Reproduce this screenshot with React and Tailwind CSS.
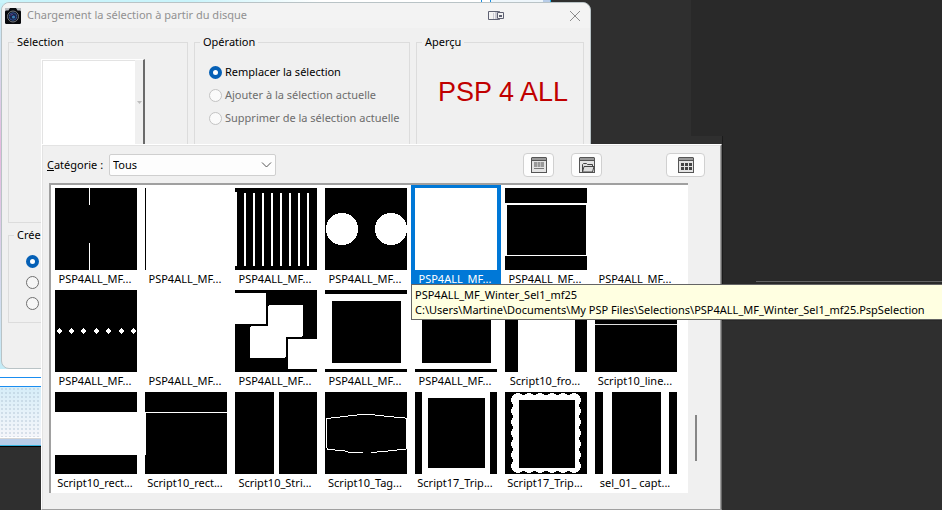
import React from "react";

const scallops = [
  ...[8, 19, 30, 41, 52, 63, 74].flatMap((y) => [
    [12, y],
    [70, y],
  ]),
  ...[13, 24, 35, 47, 58, 69].flatMap((x) => [
    [x, 7],
    [x, 75],
  ]),
];

const thumbs = [
  {
    name: "PSP4ALL_MF...",
    art: <path fill="#fff" d="M34 0h1v17h-1zM34 55h1v27h-1z" />,
  },
  { name: "PSP4ALL_MF...", art: <path fill="#fff" d="M1 0h81v82H1z" /> },
  {
    name: "PSP4ALL_MF...",
    art: (
      <path
        fill="#fff"
        d="M0 4h2v74H0zM9 5h2v73H9zM18 5h2v73h-2zM27 5h2v73h-2zM36 5h2v73h-2zM45 5h2v73h-2zM54 5h2v73h-2zM63 5h2v73h-2zM72 5h2v73h-2z"
      />
    ),
  },
  {
    name: "PSP4ALL_MF...",
    art: (
      <g fill="#fff">
        <circle cx="17" cy="41" r="16" />
        <circle cx="66" cy="41" r="16" />
      </g>
    ),
  },
  { name: "PSP4ALL_MF...", selected: true, art: <path fill="#fff" d="M0 0h82v82H0z" /> },
  {
    name: "PSP4ALL_MF...",
    art: <path fill="#fff" d="M0 15h82v2H0zM0 17h2v51H0zM81 17h1v51h-1zM0 67h82v1H0z" />,
  },
  { name: "PSP4ALL_MF...", art: <path fill="#fff" d="M0 0h82v82H0z" /> },
  {
    name: "PSP4ALL_MF...",
    art: (
      <path
        fill="#fff"
        d="M4 38l3 3-3 3-3-3zM16 38l3 3-3 3-3-3zM28 38l3 3-3 3-3-3zM41 38l3 3-3 3-3-3zM53 38l3 3-3 3-3-3zM66 38l3 3-3 3-3-3zM78 38l3 3-3 3-3-3z"
      />
    ),
  },
  { name: "PSP4ALL_MF...", art: <path fill="#fff" d="M0 0h82v82H0z" /> },
  {
    name: "PSP4ALL_MF...",
    art: (
      <g fill="#fff">
        <path d="M0 3h31v31H0zM53 49h29v30H53zM33 34h18v14H33z" />
        <rect x="33" y="15" width="35" height="32" rx="2" />
        <rect x="15" y="36" width="36" height="32" rx="2" />
      </g>
    ),
  },
  {
    name: "PSP4ALL_MF...",
    art: <path fill="#fff" fillRule="evenodd" d="M0 4h82v75H0zM7 11v62h69V11z" />,
  },
  {
    name: "PSP4ALL_MF...",
    art: <path fill="#fff" fillRule="evenodd" d="M0 4h82v75H0zM7 11v62h69V11z" />,
  },
  { name: "Script10_fro...", art: <path fill="#fff" d="M13 0h57v82H13z" /> },
  { name: "Script10_line...", art: <path fill="#ddd" d="M0 34h82v1H0z" /> },
  { name: "Script10_rect...", art: <path fill="#fff" d="M0 20h82v43H0z" /> },
  { name: "Script10_rect...", art: <path fill="#fff" d="M0 20h82v1H0zM0 21h1v42H0z" /> },
  { name: "Script10_Stri...", art: <path fill="#fff" d="M39 0h5v82h-5z" /> },
  {
    name: "Script10_Tag...",
    art: (
      <path
        fill="none"
        stroke="#fff"
        d="M38 60.5H25L18 58.5L2 57.5V56L1.500 28V26.500L19 24.500L37 22.500H46L63 24.500L80 26L81.500 27V57L63 59L46 60.500"
      />
    ),
  },
  {
    name: "Script17_Trip...",
    art: <path fill="#fff" fillRule="evenodd" d="M7 0h68v82H7zM13 6v70h57V6z" />,
  },
  {
    name: "Script17_Trip...",
    art: (
      <g>
        <path fill="#fff" d="M8 3h66v76H8z" />
        {scallops.map(([x, y]) => (
          <circle key={`${x}-${y}`} cx={x} cy={y} r="6" fill="#fff" />
        ))}
        <path fill="#000" d="M14 8h56v68H14z" />
      </g>
    ),
  },
  { name: "sel_01_ capt...", art: <path fill="#fff" d="M8 0h9v82H8zM66 0h8v82h-8z" /> },
];

const radioClass =
  "m-0 size-[13px] shrink-0 appearance-none rounded-full border border-[#6f6f6f] bg-[#f6f6f6] checked:border-4 checked:border-[#0560b6] checked:bg-white disabled:border-[#c3c3c3] disabled:bg-[#fafafa]";

function Group({ title, className, children }) {
  return (
    <fieldset className={`min-w-0 border border-[#dcdcdc] px-[5px] ${className}`}>
      <legend className="px-[3px] leading-4">{title}</legend>
      {children}
    </fieldset>
  );
}

function Choice({ label, ...props }) {
  return (
    <label className="flex items-center gap-[3px] leading-4 text-black has-disabled:text-[#6d6d6d]">
      <input type="radio" name="operation" className={radioClass} {...props} />
      {label}
    </label>
  );
}

function AppIcon() {
  return (
    <svg className="size-4 shrink-0" viewBox="0 0 16 16" aria-hidden="true">
      <path fill="#b9bcc0" d="M0 0h16v16H0z" />
      <path fill="#08090c" d="M1 2.500h2.500L5 0h6l1.500 2.500H15l1 1V15l-1 1H1l-1-1V3.500z" />
      <circle cx="8" cy="8.500" r="5.500" fill="#14171d" stroke="#73777e" strokeWidth="1" />
      <circle cx="8" cy="8.500" r="3.800" fill="#17244a" stroke="#34508e" />
      <circle cx="8.500" cy="9" r="1.600" fill="#3d7fb4" />
      <path stroke="#8b4fa4" d="M6 7.500l1.500-1.500" />
    </svg>
  );
}

function PanelFrame({ children }) {
  return (
    <svg className="size-4" viewBox="0 0 16 16" aria-hidden="true">
      <path fill="#555" d="M0 1l1-1h14l1 1v15H0z" />
      <path fill="#999" d="M1 1h14v2H1z" />
      <path fill="#e4e4e4" d="M1 4h14v11H1z" />
      {children}
    </svg>
  );
}

function ToolButton({ label, className, children }) {
  return (
    <button
      type="button"
      aria-label={label}
      className={`flex h-6 items-center justify-center rounded-[4px] border border-[#d0d0d0] bg-[#fdfdfd] ${className}`}
    >
      {children}
    </button>
  );
}

function Wallpaper() {
  return (
    <div className="absolute inset-0 flex flex-col bg-[#2f2f2f]" aria-hidden="true">
      <div className="flex h-[446px] w-[551px] flex-col border-r border-[#25b5e8] bg-white">
        <div className="flex h-[3px]">
          <div className="w-80 bg-linear-to-r from-[#c9f4fb] from-60% to-white" />
          <div className="flex-1 bg-white" />
          <div className="w-[10px] border-x border-[#1a8fe0] bg-white" />
          <div className="w-[52px] bg-[#eef6fb]" />
          <div className="w-[7px] bg-[#b8cde9]" />
        </div>
        <div className="h-[366px] w-3 bg-linear-to-b from-[#c4f1f9] via-[#e6b9de] via-40% to-[#c4ecf7]" />
        <div className="h-2" />
        <div className="h-[10px] border-y border-[#1a8df0]" />
        <div className="flex flex-1 bg-linear-to-b from-[#d6edf8] to-[#f5f6fa]">
          <div className="flex-1 bg-[radial-gradient(#9fb4c855_1px,transparent_1px)] bg-size-[4px_4px]" />
        </div>
        <div className="h-[2px] border-b border-[#d5d5d5] bg-white" />
        <div className="h-[7px] border-b border-[#35b3df] bg-[#b8cde9]" />
      </div>
      <div className="h-px w-[551px] bg-black" />
    </div>
  );
}

export default function App() {
  return (
    <main className="relative h-screen overflow-hidden bg-[#2f2f2f] font-['Noto_Sans',sans-serif] text-[11px] text-black">
      <Wallpaper />
      <div className="absolute top-0 right-0 left-[691px] h-[136px] bg-[#292929]" />
      <div className="absolute top-[136px] right-0 left-[722px] h-[185px] border-l border-[#1b1b1b] bg-[#292929]" />
      <div className="absolute top-[281px] right-0 left-[756px] h-1 border-t border-[#636363]" />

      <section className="absolute top-[2px] left-px h-[367px] w-[590px] rounded-lg border border-[#b9c3c6] bg-[#f0f0f0]">
        <header className="flex h-[25px] items-center rounded-t-lg bg-[#f3f3f3] pr-[9px] pl-[3px]">
          <AppIcon />
          <h1 className="ml-[6px] flex-1 text-[#919191]">
            Chargement la sélection à partir du disque
          </h1>
          <button type="button" aria-label="Afficher sur un autre écran" className="mr-[65px]">
            <svg className="h-[11px] w-4" viewBox="0 0 16 11" fill="none" aria-hidden="true">
              <path stroke="#5e6172" d="M.5 1.500h10v8H.5zM10.500 1.500h1v8h-1" />
              <path fill="#c9c9d2" d="M5 3h1v6H5zM7 2h2v7H7z" />
              <path fill="#f3f3f3" stroke="#5e6172" d="M9.500 2.500h6v6h-6z" />
              <path fill="#5e6172" d="M11 5h3v2h-3z" />
            </svg>
          </button>
          <button type="button" aria-label="Fermer">
            <svg className="size-3" viewBox="0 0 12 12" aria-hidden="true">
              <path stroke="#8c8c8c" d="M1 1l10 10M11 1L1 11" />
            </svg>
          </button>
        </header>
        <div className="grid grid-cols-[180px_216px_168px] gap-x-[6px] gap-y-1 px-[6px] pt-[6px]">
          <Group title="Sélection" className="h-[189px]" />
          <Group title="Opération" className="h-[189px]">
            <div className="flex flex-col gap-[7px] pt-[14px] pl-[9px]">
              <Choice label="Remplacer la sélection" defaultChecked />
              <Choice label="Ajouter à la sélection actuelle" disabled />
              <Choice label="Supprimer de la sélection actuelle" disabled />
            </div>
          </Group>
          <Group title="Aperçu" className="h-[189px]">
            <p className="pt-6 pl-[6px] text-center font-['Liberation_Sans',sans-serif] text-[27px] leading-9 text-[#c00000]">
              PSP 4 ALL
            </p>
          </Group>
          <Group title="Crée" className="col-span-3 h-24">
            <div className="flex flex-col gap-2 pt-3 pl-3">
              <input type="radio" name="creer" aria-label="1" defaultChecked className={radioClass} />
              <input type="radio" name="creer" aria-label="2" className={radioClass} />
              <input type="radio" name="creer" aria-label="3" className={radioClass} />
            </div>
          </Group>
        </div>
      </section>

      <button
        type="button"
        aria-label="Sélection courante"
        className="absolute top-[59px] left-[41px] flex h-[86px] w-[104px] items-center justify-end border-t border-r-2 border-l border-t-white border-r-[#6a6a6a] border-l-white bg-[#f0f0f0]"
      >
        <span className="h-full flex-1 border-t border-l border-[#e3e3e3] bg-white" />
        <svg className="ml-px h-[3px] w-[7px]" viewBox="0 0 7 3" aria-hidden="true">
          <path fill="#bdbdbd" d="M1 0h5L3.500 3z" />
        </svg>
      </button>

      <section className="absolute top-[144px] bottom-0 left-[41px] w-[681px] border border-t-white border-r-[#696969] border-b-[#a0a0a0] border-l-white bg-[#f0f0f0]">
        <div className="flex h-full flex-col border-t border-r border-l border-t-[#e3e3e3] border-r-[#a0a0a0] border-l-[#e3e3e3] pl-[6px]">
          <div className="flex h-[37px] items-center pt-px pr-[15px]">
            <label htmlFor="categorie" className="-ml-[2px] w-[62px]">
              <u>C</u>atégorie :
            </label>
            <div className="relative flex">
              <select
                id="categorie"
                className="h-[22px] w-[167px] appearance-none rounded-[2px] border border-[#cfcfcf] bg-[#fdfdfd] pl-[3px] text-[11px]"
              >
                <option>Tous</option>
              </select>
              <svg
                className="pointer-events-none absolute top-2 right-1 h-[6px] w-[11px]"
                viewBox="0 0 11 6"
                fill="none"
                aria-hidden="true"
              >
                <path stroke="#555" d="M1 .5l4.500 4.500L10 .5" />
              </svg>
            </div>
            <ToolButton label="Afficher les détails" className="ml-auto w-[31px]">
              <PanelFrame>
                <path fill="#999" d="M3 5h3v5H3zM6.500 5h3v5h-3zM10 5h3v5h-3z" />
                <path fill="#777" d="M3 11h10v1H3z" />
              </PanelFrame>
            </ToolButton>
            <ToolButton label="Emplacements des fichiers" className="ml-[17px] w-[31px]">
              <PanelFrame>
                <path fill="#ddd" stroke="#444" d="M3.500 14V7.500l1-1h3l1 1h5V9M5 9.500h10L13.500 15H3.500z" />
              </PanelFrame>
            </ToolButton>
            <ToolButton label="Afficher les vignettes" className="ml-16 w-[39px]">
              <PanelFrame>
                <path
                  fill="#444"
                  d="M3 6h3v3H3zM7 6h3v3H7zM11 6h3v3h-3zM3 10h3v3H3zM7 10h3v3H7zM11 10h3v3h-3z"
                />
              </PanelFrame>
            </ToolButton>
          </div>
          <div className="flex">
            <ul className="grid h-[310px] w-[639px] grid-cols-[repeat(7,90px)] content-start border-t-2 border-l-2 border-[#a0a0a0] bg-white">
              {thumbs.map((t, i) => (
                <li
                  key={i}
                  className={`flex h-[102px] flex-col items-center overflow-hidden pt-[3px] ${
                    t.selected ? "bg-[#0078d7] text-white" : ""
                  }`}
                >
                  <svg
                    className="size-[82px] shrink-0 bg-black"
                    viewBox="0 0 82 82"
                    shapeRendering="crispEdges"
                    aria-hidden="true"
                  >
                    {t.art}
                  </svg>
                  <span className="pr-[2px] leading-[18px]">{t.name}</span>
                </li>
              ))}
            </ul>
            <div className="ml-[7px] pt-[232px]">
              <div className="h-[46px] w-[2px] bg-[#868686]" />
            </div>
          </div>
        </div>
      </section>

      <div
        role="tooltip"
        className="absolute top-[284px] right-0 left-[411px] flex h-9 flex-col justify-center border-y border-l border-[#646464] bg-[#ffffe1] pl-[3px] whitespace-nowrap"
      >
        <span className="leading-[15px]">PSP4ALL_MF_Winter_Sel1_mf25</span>
        <span className="leading-[15px]">
          C:\Users\Martine\Documents\My PSP Files\Selections\PSP4ALL_MF_Winter_Sel1_mf25.PspSelection
        </span>
      </div>
    </main>
  );
}
